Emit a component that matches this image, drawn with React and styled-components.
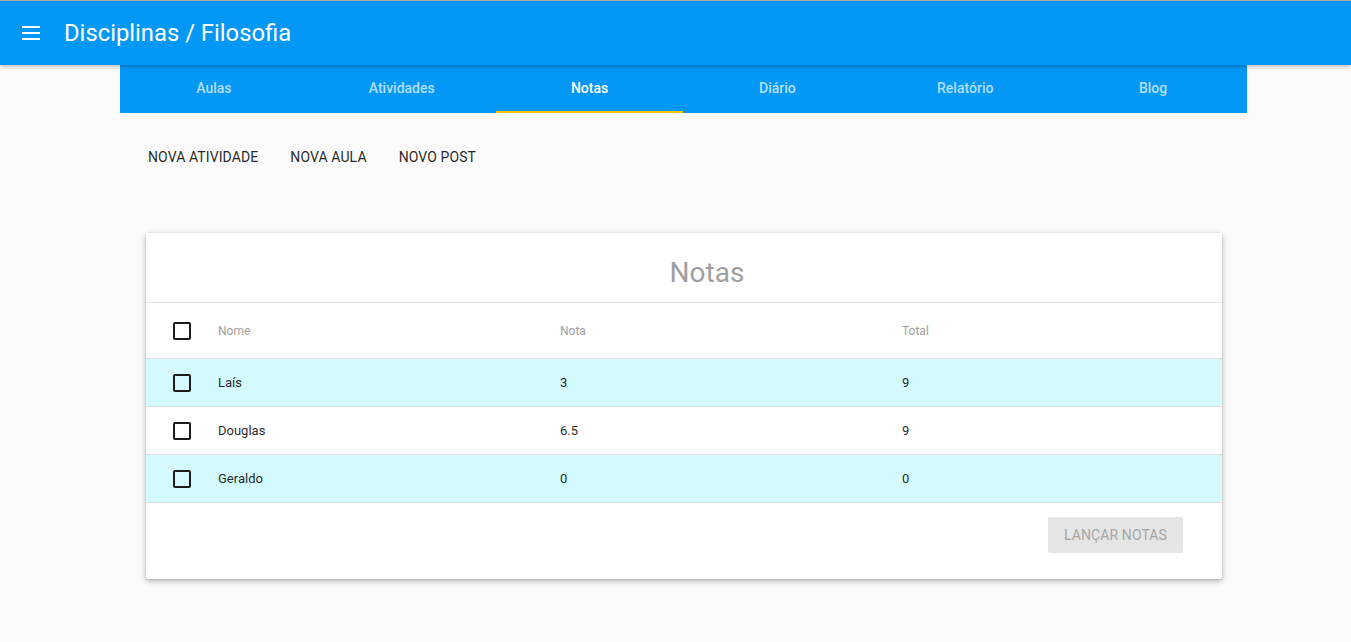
import React from "react";
import styled, { createGlobalStyle } from "styled-components";

const GlobalStyle = createGlobalStyle`
  html, body {
    margin: 0;
    padding: 0;
    background-color: #fafafa;
    font-family: Roboto, "Liberation Sans", Arial, sans-serif;
  }
  body {
    border-top: 1px solid #a8a8a8;
    padding-bottom: 40px;
  }
`;

const AppBar = styled.header`
  display: flex;
  align-items: center;
  height: 64px;
  padding: 0 24px 0 22px;
  background-color: #0398f6;
  color: white;
  box-shadow: 0 2px 4px rgba(0, 0, 0, 0.22);
  position: relative;
  z-index: 2;
`;

const MenuButton = styled.button`
  display: flex;
  flex-direction: column;
  gap: 4px;
  width: 20px;
  padding: 0;
  margin-right: 22px;
  background: none;
  border: none;
  cursor: pointer;

  span {
    display: block;
    height: 2px;
    width: 18px;
    background: white;
  }
`;

const Title = styled.h1`
  margin: 0;
  font-size: 23.8px;
  font-weight: 400;
`;

const Main = styled.main`
  width: 1127px;
  margin-left: 120px;
`;

const Tabs = styled.nav`
  display: grid;
  grid-template-columns: repeat(6, 1fr);
  background-color: #0398f6;
  height: 48px;
`;

const Tab = styled.div`
  display: flex;
  align-items: center;
  justify-content: center;
  font-size: 14px;
  font-weight: 500;
  color: ${(p) => (p.$active ? "#ffffff" : "rgba(255, 255, 255, 0.7)")};
  border-bottom: 2px solid ${(p) => (p.$active ? "#ffc400" : "transparent")};
  box-sizing: border-box;
`;

const Actions = styled.div`
  display: flex;
  padding: 27px 12px 0;
`;

const FlatButton = styled.button`
  background: none;
  border: none;
  padding: 9px 16px;
  font-family: inherit;
  font-size: 14px;
  font-weight: 400;
  color: rgba(0, 0, 0, 0.87);
  text-transform: uppercase;
  letter-spacing: 0.1px;
  cursor: pointer;
`;

const Card = styled.section`
  margin: 59px 25px 0 26px;
  background: white;
  box-shadow: 0 2px 6px rgba(0, 0, 0, 0.28), 0 1px 2px rgba(0, 0, 0, 0.12);
  border-radius: 2px;
`;

const CardTitle = styled.h2`
  margin: 0;
  height: 70px;
  display: flex;
  align-items: center;
  justify-content: center;
  font-size: 28px;
  font-weight: 400;
  color: #9e9e9e;
  border-bottom: 1px solid #e0e0e0;
  padding: 10px 0 0 46px;
  box-sizing: border-box;
`;

const Row = styled.div`
  display: grid;
  grid-template-columns: 72px 342px 342px 1fr;
  align-items: center;
  box-sizing: border-box;
  height: ${(p) => (p.$head ? "56px" : "48px")};
  background: ${(p) => (p.$shade ? "#d4fafd" : "white")};
  border-bottom: 1px solid #e0e0e0;
  font-size: ${(p) => (p.$head ? "12px" : "13px")};
  color: ${(p) => (p.$head ? "#9e9e9e" : "rgba(0, 0, 0, 0.87)")};
`;

const Cell = styled.div`
  white-space: nowrap;
`;

const CheckCell = styled.div`
  display: flex;
  padding-left: 27px;
`;

const Box = styled.span`
  display: block;
  width: 14px;
  height: 14px;
  border: 2px solid #1c1c1c;
  border-radius: 2px;
`;

const CardFooter = styled.div`
  display: flex;
  justify-content: flex-end;
  padding: 14px 39px 26px;
`;

const RaisedButton = styled.button`
  height: 36px;
  padding: 0 16px;
  background: #e5e5e5;
  border: none;
  border-radius: 2px;
  font-family: inherit;
  font-size: 14px;
  color: #a6a6a6;
  text-transform: uppercase;
  letter-spacing: 0.1px;
`;

const tabs = ["Aulas", "Atividades", "Notas", "Diário", "Relatório", "Blog"];

const alunos = [
  { nome: "Laís", nota: "3", total: "9" },
  { nome: "Douglas", nota: "6.5", total: "9" },
  { nome: "Geraldo", nota: "0", total: "0" },
];

export default function App() {
  return (
    <>
      <GlobalStyle />
      <AppBar>
        <MenuButton aria-label="menu">
          <span />
          <span />
          <span />
        </MenuButton>
        <Title>Disciplinas / Filosofia</Title>
      </AppBar>
      <Main>
        <Tabs>
          {tabs.map((t) => (
            <Tab key={t} $active={t === "Notas"}>
              {t}
            </Tab>
          ))}
        </Tabs>
        <Actions>
          <FlatButton>Nova atividade</FlatButton>
          <FlatButton>Nova aula</FlatButton>
          <FlatButton>Novo post</FlatButton>
        </Actions>
        <Card>
          <CardTitle>Notas</CardTitle>
          <Row $head>
            <CheckCell>
              <Box />
            </CheckCell>
            <Cell>Nome</Cell>
            <Cell>Nota</Cell>
            <Cell>Total</Cell>
          </Row>
          {alunos.map((a, i) => (
            <Row key={a.nome} $shade={i % 2 === 0}>
              <CheckCell>
                <Box />
              </CheckCell>
              <Cell>{a.nome}</Cell>
              <Cell>{a.nota}</Cell>
              <Cell>{a.total}</Cell>
            </Row>
          ))}
          <CardFooter>
            <RaisedButton>Lançar notas</RaisedButton>
          </CardFooter>
        </Card>
      </Main>
    </>
  );
}
